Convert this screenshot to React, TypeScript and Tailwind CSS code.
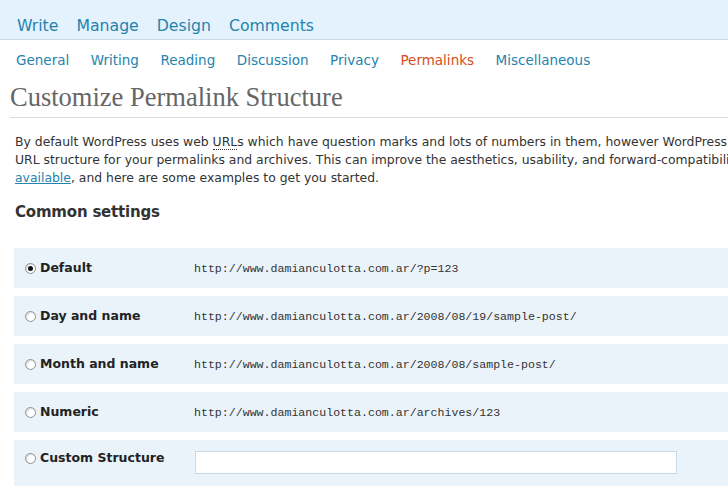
import React from "react";

const sans = "font-['DejaVu_Sans',sans-serif]";

const topNav = ["Write", "Manage", "Design", "Comments"];
const subNav = ["General", "Writing", "Reading", "Discussion", "Privacy", "Permalinks", "Miscellaneous"];

const rows = [
  { label: "Default", url: "http://www.damianculotta.com.ar/?p=123", checked: true },
  { label: "Day and name", url: "http://www.damianculotta.com.ar/2008/08/19/sample-post/" },
  { label: "Month and name", url: "http://www.damianculotta.com.ar/2008/08/sample-post/" },
  { label: "Numeric", url: "http://www.damianculotta.com.ar/archives/123" },
];

function Radio({ checked }: { checked?: boolean }) {
  return (
    <span className="w-[11px] h-[11px] rounded-full border border-[#8e8f8f] bg-white flex items-center justify-center shrink-0 shadow-[inset_1px_1px_1px_rgba(0,0,0,0.15)]">
      {checked && <span className="w-[5px] h-[5px] rounded-full bg-[#111]" />}
    </span>
  );
}

export default function App() {
  return (
    <div className={`w-[728px] h-[489px] overflow-hidden bg-white ${sans}`}>
      {/* Top menu */}
      <div className="h-[40px] bg-[#e4f2fd] border-b border-[#c6d9e9] flex gap-[18px] pl-[17px] pt-[16px]">
        {topNav.map((t) => (
          <span key={t} className="text-[15.7px] leading-[20px] text-[#2583ad] whitespace-nowrap">
            {t}
          </span>
        ))}
      </div>

      {/* Sub menu */}
      <div className="flex gap-[21.5px] pl-[16px] pt-[10px]">
        {subNav.map((t) => (
          <span
            key={t}
            className={`text-[13.5px] leading-[20px] whitespace-nowrap ${
              t === "Permalinks" ? "text-[#d54e21]" : "text-[#2583ad]"
            }`}
          >
            {t}
          </span>
        ))}
      </div>

      <div className="w-[1000px]">
        <h2 className="ml-[10px] mt-[11px] pb-[4px] border-b border-[#dadada] font-['Liberation_Serif',serif] text-[26.5px] leading-[32px] text-[#666] font-normal">
          Customize Permalink Structure
        </h2>

        <p className="ml-[15px] mt-[15px] text-[12.4px] leading-[18px] text-[#333] whitespace-nowrap">
          By default WordPress uses web{" "}
          <span className="border-b border-dotted border-[#333]">URL</span>s which have question marks and lots of numbers in them, however WordPress offers you the ability to create a custom
          <br />
          URL structure for your permalinks and archives. This can improve the aesthetics, usability, and forward-compatibility of your links. A number of tags are
          <br />
          <span className="text-[#2583ad] underline">available</span>, and here are some examples to get you started.
        </p>

        <h3 className="ml-[15px] mt-[15px] text-[15px] leading-[20px] font-bold text-[#333] tracking-[-0.2px]">
          Common settings
        </h3>

        <div className="ml-[14px] mt-[26px] flex flex-col gap-[8px]">
          {rows.map((r) => (
            <div key={r.label} className="h-[40px] bg-[#eaf3fa] flex items-center">
              <div className="w-[180px] pl-[11px] flex items-center gap-[4px]">
                <Radio checked={r.checked} />
                <span className="text-[12.5px] leading-[20px] font-bold text-[#222] whitespace-nowrap">{r.label}</span>
              </div>
              <span className="font-['Liberation_Mono',monospace] text-[11.6px] leading-[20px] text-[#333] whitespace-nowrap pt-[2px]">
                {r.url}
              </span>
            </div>
          ))}
          <div className="h-[46px] bg-[#eaf3fa] flex items-start pt-[8px]">
            <div className="w-[180px] pl-[11px] flex items-center gap-[4px]">
              <Radio />
              <span className="text-[12.5px] leading-[20px] font-bold text-[#222] whitespace-nowrap">Custom Structure</span>
            </div>
            <input
              type="text"
              className="mt-[3px] ml-[1px] w-[482px] h-[23px] bg-white border border-[#c6d9e9] outline-none"
            />
          </div>
        </div>
      </div>
    </div>
  );
}
